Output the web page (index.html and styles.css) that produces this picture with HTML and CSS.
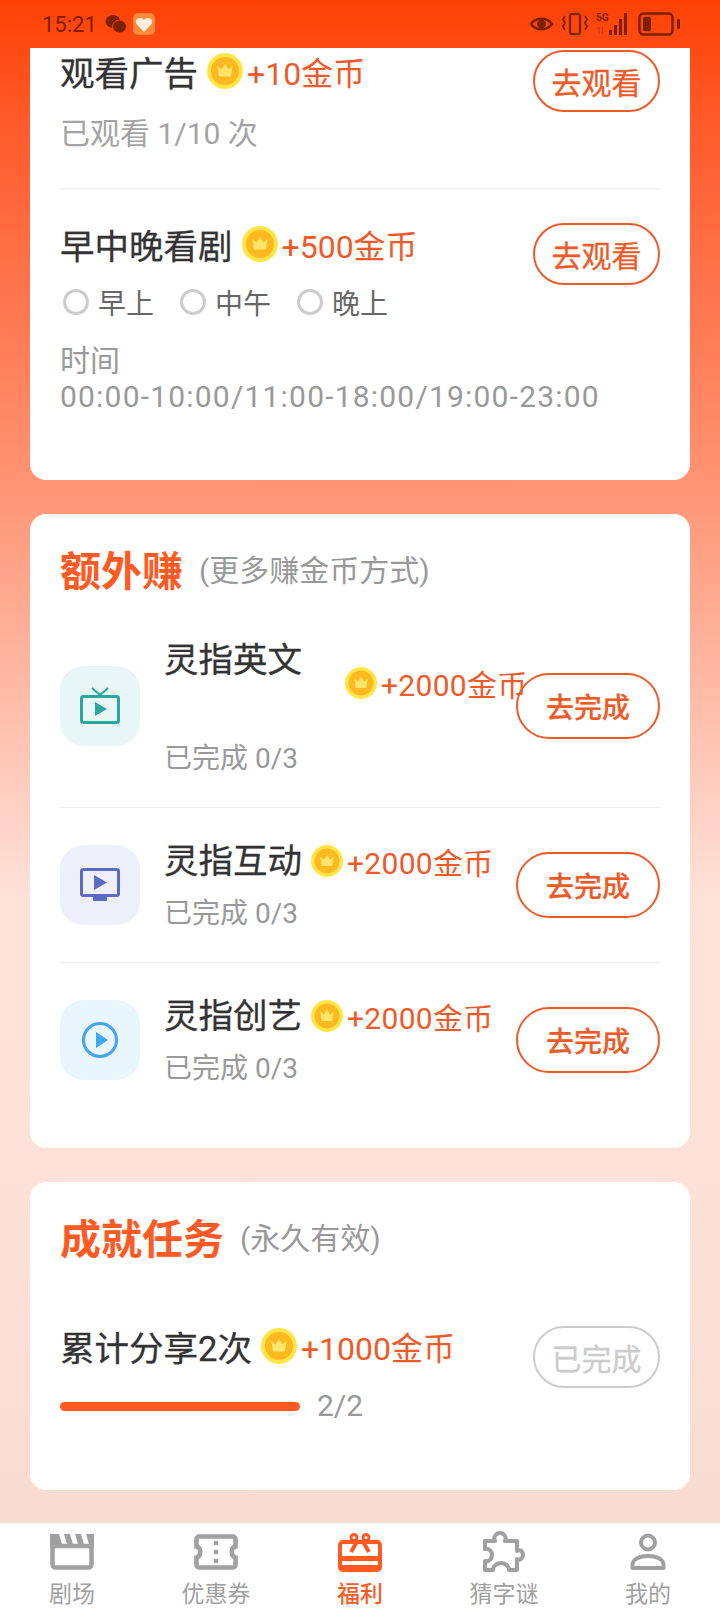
FILE: index.html
```html
<!DOCTYPE html>
<html lang="zh-CN">
<head>
    <meta charset="UTF-8">
    <meta name="viewport" content="width=720, initial-scale=1.0">
    <title>福利</title>
    <link rel="stylesheet" href="styles.css">
</head>
<body>
    <!-- 金币图标 -->
    <svg class="defs" width="0" height="0">
        <symbol id="coin" viewBox="0 0 36 36">
            <circle cx="18" cy="18" r="18" fill="#ffe546"/>
            <circle cx="18" cy="18" r="14" fill="#fdb91f"/>
            <path d="M10.500 13l4 3.600L18 11l3.500 5.600 4-3.600-1.500 10.500h-12z" fill="#ffe569"/>
        </symbol>
    </svg>

    <div class="page">
        <!-- 状态栏 -->
        <div class="status-bar">
            <span class="status-time">15:21</span>
            <svg width="22" height="20" viewBox="0 0 22 20">
                <ellipse cx="8" cy="7.500" rx="7.500" ry="6.500" fill="#7d2000"/>
                <ellipse cx="14.500" cy="12.500" rx="7" ry="6.500" fill="#7d2000" stroke="#ff4306" stroke-width="1"/>
            </svg>
            <svg class="status-app" width="22" height="22" viewBox="0 0 22 22">
                <rect width="22" height="22" rx="5" fill="#ff8a3c"/>
                <path d="M11 19L3.500 11c-3-4.500 4-8.500 7.500-4 3.500-4.500 10.500-.5 7.500 4z" fill="#ffeee2"/>
            </svg>
            <span class="status-space"></span>
            <svg width="25" height="18" viewBox="0 0 24 18">
                <path d="M1.500 9C6 2 18 2 22.500 9 18 16 6 16 1.500 9z" fill="none" stroke="#7d2000" stroke-width="2.500"/>
                <circle cx="12" cy="9" r="4.500" fill="#7d2000"/>
            </svg>
            <svg width="26" height="24" viewBox="0 0 26 24">
                <rect x="8" y="2" width="10" height="20" rx="2" fill="none" stroke="#7d2000" stroke-width="2.200"/>
                <path d="M3 4l-2 3.500L3 11l-2 3.500L3 18M23 4l2 3.500-2 3.500 2 3.500-2 3.500" fill="none" stroke="#7d2000" stroke-width="1.800"/>
            </svg>
            <svg width="34" height="24" viewBox="0 0 34 24">
                <text x="0" y="9" class="status-5g">5G</text>
                <text x="0" y="22" class="status-1">1l</text>
                <path d="M13 18h3v5h-3zM18 13h3v10h-3zM23 7h3v16h-3zM28 1h3v22h-3z" fill="#7d2000"/>
            </svg>
            <svg width="44" height="24" viewBox="0 0 44 24">
                <rect x="1.500" y="1.500" width="33" height="21" rx="4" fill="none" stroke="#7d2000" stroke-width="2.500"/>
                <rect x="5" y="5" width="8" height="14" rx="1.500" fill="#7d2000"/>
                <rect x="39" y="7" width="3" height="10" rx="1" fill="#7d2000"/>
            </svg>
        </div>

        <main class="content">
            <!-- 看广告 -->
            <section class="card card-top">
                <div class="task task-ad">
                    <div class="task-left">
                        <div class="task-title">
                            <span>观看广告</span>
                            <svg class="coin-big"><use href="#coin"/></svg>
                            <span class="reward">+10金币</span>
                        </div>
                        <div class="task-note">已观看 1/10 次</div>
                    </div>
                    <button class="btn">去观看</button>
                </div>
                <div class="task task-meal">
                    <div class="task-left">
                        <div class="task-title">
                            <span>早中晚看剧</span>
                            <svg class="coin-big"><use href="#coin"/></svg>
                            <span class="reward">+500金币</span>
                        </div>
                        <div class="periods">
                            <div class="period"><i class="radio"></i>早上</div>
                            <div class="period"><i class="radio"></i>中午</div>
                            <div class="period"><i class="radio"></i>晚上</div>
                        </div>
                        <div class="time-range">时间<br><span class="time-digits">00:00-10:00/11:00-18:00/19:00-23:00</span></div>
                    </div>
                    <button class="btn">去观看</button>
                </div>
            </section>

            <!-- 额外赚 -->
            <section class="card card-extra">
                <div class="card-head">
                    <h2>额外赚</h2>
                    <span>(更多赚金币方式)</span>
                </div>
                <div class="app-row app-row-first">
                    <div class="app-icon icon-teal">
                        <svg width="40" height="38" viewBox="0 0 40 38">
                            <path d="M12 1l8 7 8-7" fill="none" stroke="#2aa79b" stroke-width="2"/>
                            <rect x="1.500" y="9.500" width="37" height="26" rx="2" fill="none" stroke="#2aa79b" stroke-width="3"/>
                            <path d="M15 15l12 7-12 7z" fill="#2aa79b"/>
                        </svg>
                    </div>
                    <div class="app-info">
                        <div class="app-name">灵指英文</div>
                        <div class="app-reward-wrapped">
                            <svg class="coin-small"><use href="#coin"/></svg>
                            <span class="reward reward-small">+2000金币</span>
                        </div>
                        <div class="app-note app-note-wrapped">已完成 0/3</div>
                    </div>
                    <button class="btn btn-wide">去完成</button>
                </div>
                <div class="app-row">
                    <div class="app-icon icon-indigo">
                        <svg width="40" height="34" viewBox="0 0 40 34">
                            <rect x="1.500" y="1.500" width="37" height="26" rx="2" fill="none" stroke="#5b6bc0" stroke-width="3"/>
                            <path d="M14 7l13 7.500L14 22z" fill="#5b6bc0"/>
                            <rect x="13" y="29" width="14" height="4" fill="#5b6bc0"/>
                        </svg>
                    </div>
                    <div class="app-info">
                        <div class="app-line">
                            <span class="app-name">灵指互动</span>
                            <svg class="coin-small"><use href="#coin"/></svg>
                            <span class="reward reward-small">+2000金币</span>
                        </div>
                        <div class="app-note">已完成 0/3</div>
                    </div>
                    <button class="btn btn-wide">去完成</button>
                </div>
                <div class="app-row app-row-last">
                    <div class="app-icon icon-blue">
                        <svg width="38" height="38" viewBox="0 0 38 38">
                            <circle cx="19" cy="19" r="16.500" fill="none" stroke="#42a5f0" stroke-width="3"/>
                            <path d="M15 11l12 8-12 8z" fill="#42a5f0"/>
                        </svg>
                    </div>
                    <div class="app-info">
                        <div class="app-line">
                            <span class="app-name">灵指创艺</span>
                            <svg class="coin-small"><use href="#coin"/></svg>
                            <span class="reward reward-small">+2000金币</span>
                        </div>
                        <div class="app-note">已完成 0/3</div>
                    </div>
                    <button class="btn btn-wide">去完成</button>
                </div>
            </section>

            <!-- 成就任务 -->
            <section class="card card-achieve">
                <div class="card-head">
                    <h2>成就任务</h2>
                    <span>(永久有效)</span>
                </div>
                <div class="task task-share">
                    <div class="task-left">
                        <div class="task-title">
                            <span>累计分享2次</span>
                            <svg class="coin-big"><use href="#coin"/></svg>
                            <span class="reward">+1000金币</span>
                        </div>
                        <div class="progress-line">
                            <div class="progress"></div>
                            <span>2/2</span>
                        </div>
                    </div>
                    <button class="btn btn-done">已完成</button>
                </div>
            </section>
        </main>

        <!-- 底部导航 -->
        <nav class="tabbar">
            <div class="tab">
                <div class="tab-icon">
                    <svg width="44" height="36" viewBox="0 0 44 36">
                        <path d="M0 0h44v14H0z" fill="#a0a0a0"/>
                        <path d="M9 0h5l3 10h-5zM20 0h5l3 10h-5zM31 0h5l3 10h-5z" fill="#fff"/>
                        <path d="M2.500 12v18.500a3 3 0 0 0 3 3h33a3 3 0 0 0 3-3V12z" fill="none" stroke="#a0a0a0" stroke-width="4.500"/>
                    </svg>
                </div>
                <span>剧场</span>
            </div>
            <div class="tab">
                <div class="tab-icon">
                    <svg width="44" height="36" viewBox="0 0 44 36">
                        <path d="M5 2.500h34a2.500 2.500 0 0 1 2.500 2.500v7.500c-5 1-5 10 0 11V31a2.500 2.500 0 0 1-2.500 2.500H5A2.500 2.500 0 0 1 2.500 31v-7.500c5-1 5-10 0-11V5A2.500 2.500 0 0 1 5 2.500z" fill="none" stroke="#a0a0a0" stroke-width="4.500"/>
                        <path d="M20 7h4v4h-4zM20 16h4v4h-4zM20 25h4v4h-4z" fill="#a0a0a0"/>
                    </svg>
                </div>
                <span>优惠券</span>
            </div>
            <div class="tab tab-active">
                <div class="tab-icon">
                    <svg width="44" height="39" viewBox="0 0 44 39">
                        <rect x="2" y="9" width="40" height="28" rx="3" fill="none" stroke="#ff5a24" stroke-width="4"/>
                        <rect x="2" y="23" width="40" height="5" fill="#ff5a24"/>
                        <rect x="2" y="32" width="40" height="5" fill="#ff5a24"/>
                        <circle cx="16" cy="4.500" r="3" fill="none" stroke="#ff5a24" stroke-width="3"/>
                        <circle cx="28" cy="4.500" r="3" fill="none" stroke="#ff5a24" stroke-width="3"/>
                        <path d="M20 7l-7 12M24 7l7 12" fill="none" stroke="#ff5a24" stroke-width="4"/>
                    </svg>
                </div>
                <span>福利</span>
            </div>
            <div class="tab">
                <div class="tab-icon">
                    <svg width="44" height="42" viewBox="0 0 44 42">
                        <path d="M3 10h10c-2-4 1-8 5-8s7 4 5 8h12v10c4-2 6 1 6 4s-3 6-6 4v11h-8c0-4-4-7-8-7s-8 3-8 7H3v-9c4 1 7-2 7-6s-3-7-7-6z" fill="none" stroke="#a0a0a0" stroke-width="4" stroke-linejoin="round"/>
                    </svg>
                </div>
                <span>猜字谜</span>
            </div>
            <div class="tab">
                <div class="tab-icon">
                    <svg width="36" height="38" viewBox="0 0 36 38">
                        <circle cx="18" cy="9.500" r="7" fill="none" stroke="#a0a0a0" stroke-width="4"/>
                        <path d="M2.500 35v-3c0-6 7-9 15.500-9s15.500 3 15.500 9v3z" fill="none" stroke="#a0a0a0" stroke-width="4" stroke-linejoin="round"/>
                    </svg>
                </div>
                <span>我的</span>
            </div>
        </nav>
    </div>
</body>
</html>
```

FILE: styles.css
```css
body {
    margin: 0;
    padding: 0;
    font-family: Roboto, "Noto Sans CJK SC", sans-serif;
    color: #333;
}

.defs {
    display: block;
    height: 0;
}

.page {
    width: 720px;
    height: 1612px;
    overflow: hidden;
    display: flex;
    flex-direction: column;
    background: linear-gradient(#ff4104 0, #ff5a2a 120px, #ff9373 480px, #ffe2da 900px, #fde0d7 1300px, #f8dbd1 1523px);
}

/* 状态栏 */
.status-bar {
    height: 48px;
    flex-shrink: 0;
    display: flex;
    align-items: center;
    gap: 8px;
    padding: 0 38px 0 42px;
    box-sizing: border-box;
    color: #7d2000;
}

.status-time {
    font-size: 22px;
}

.status-app {
    margin-left: -2px;
}

.status-space {
    flex: 1;
}

.status-5g {
    font-size: 10px;
    font-weight: bold;
    fill: #7d2000;
}

.status-1 {
    font-size: 9px;
    fill: #b03a10;
}

/* 内容区 */
.content {
    flex: 1;
    overflow: hidden;
}

.card {
    margin: 0 30px 34px;
    padding: 0 30px;
    background-color: #fff;
    border-radius: 16px;
}

.card-top {
    height: 432px;
    border-radius: 0 0 16px 16px;
    box-sizing: border-box;
}

.card-head {
    display: flex;
    align-items: center;
    gap: 16px;
    height: 56px;
    padding-top: 30px;
}

.card-head h2 {
    margin: 0;
    font-size: 41px;
    line-height: 56px;
    color: #ff5a24;
}

.card-head span {
    margin-top: -8px;
    font-size: 30px;
    color: #999;
}

/* 任务行 */
.task {
    display: flex;
    justify-content: space-between;
    align-items: flex-start;
}

.task-ad {
    padding-top: 2px;
    height: 138px;
    border-bottom: 1px solid #eee;
}

.task-ad .task-left {
    margin-top: -3px;
}

.task-meal {
    padding-top: 34px;
}

.task-meal .task-left {
    margin-top: -3px;
}

.task-left {
    flex: 1;
    min-width: 0;
}

.task-title {
    display: flex;
    align-items: center;
    height: 48px;
    font-size: 34.5px;
    -webkit-text-stroke: 0.3px #333;
}

.coin-big {
    flex-shrink: 0;
    width: 36px;
    height: 36px;
    margin: 0 4px 0 9px;
}

.coin-small {
    flex-shrink: 0;
    width: 32px;
    height: 32px;
    margin: 0 4px 0 9px;
}

.reward {
    font-size: 32px;
    color: #f05a28;
    white-space: nowrap;
    -webkit-text-stroke: 0;
}

.reward-small {
    font-size: 30px;
    letter-spacing: 0.3px;
}

.task-note {
    margin-top: 19px;
    font-size: 30px;
    line-height: 40px;
    color: #a3a3a3;
}

/* 早中晚 */
.periods {
    display: flex;
    margin-top: 19px;
    height: 30px;
}

.period {
    width: 117px;
    display: flex;
    align-items: center;
    gap: 9px;
    font-size: 28px;
    color: #666;
}

.radio {
    width: 20px;
    height: 20px;
    margin-left: 3px;
    border: 3px solid #ccc;
    border-radius: 50%;
}

.time-range {
    margin-top: 26px;
    font-size: 30px;
    line-height: 36px;
    color: #999;
    white-space: nowrap;
}

.time-digits {
    letter-spacing: 1.2px;
}

/* 按钮 */
.btn {
    flex-shrink: 0;
    width: 127px;
    height: 62px;
    padding: 0;
    background: transparent;
    border: 2px solid #f05a28;
    border-radius: 31px;
    font-family: inherit;
    font-size: 30px;
    color: #f05a28;
    -webkit-text-stroke: 0.3px currentColor;
}

.btn-wide {
    width: 144px;
    height: 66px;
    border-radius: 33px;
    font-size: 28px;
    font-weight: 500;
    -webkit-text-stroke: 0.2px currentColor;
}

.btn-done {
    margin-top: 4px;
    border-color: #ccc;
    color: #ccc;
}

/* 应用行 */
.app-row {
    display: flex;
    align-items: center;
    padding: 26px 0;
    border-bottom: 1px solid #eee;
}

.app-row-first {
    padding: 36px 0 31px;
}

.app-row-last {
    padding-bottom: 57px;
    border-bottom: none;
}

.app-icon {
    width: 80px;
    height: 80px;
    flex-shrink: 0;
    margin-right: 24px;
    border-radius: 24px;
    display: flex;
    align-items: center;
    justify-content: center;
}

.icon-teal {
    background-color: #e8f6f5;
}

.icon-indigo {
    background-color: #edf0fa;
}

.icon-blue {
    background-color: #e9f5ff;
}

.app-info {
    flex: 1;
    min-width: 0;
}

.app-line {
    display: flex;
    align-items: center;
    height: 48px;
    margin-top: 3px;
}

.app-name {
    font-size: 34.5px;
    line-height: 48px;
    -webkit-text-stroke: 0.3px #333;
}

.app-note {
    margin: 5px 0 -2px;
    font-size: 28px;
    line-height: 48px;
    color: #999;
}

/* 灵指英文 这一行金币掉到下面了 */
.app-reward-wrapped {
    display: flex;
    align-items: center;
    height: 40px;
    margin: -21px 0 0 172px;
}

.app-note-wrapped {
    margin: 37px 0 -2px;
    line-height: 38px;
}

/* 成就 */
.task-share {
    padding-top: 54px;
}

.card-achieve {
    height: 308px;
    box-sizing: border-box;
}

.progress-line {
    display: flex;
    align-items: center;
    gap: 17px;
    margin-top: 17px;
    font-size: 30px;
    line-height: 38px;
    color: #999;
}

.progress {
    width: 240px;
    height: 9px;
    border-radius: 5px;
    background-color: #ff5a24;
}

/* 底部导航 */
.tabbar {
    height: 89px;
    flex-shrink: 0;
    display: flex;
    background-color: #fff;
}

.tab {
    flex: 1;
    height: 89px;
    padding-top: 8px;
    box-sizing: border-box;
    display: flex;
    flex-direction: column;
    align-items: center;
    font-size: 23px;
    line-height: 34px;
    color: #a0a0a0;
}

.tab-icon {
    height: 47px;
    padding-bottom: 5px;
    box-sizing: border-box;
    display: flex;
    align-items: center;
}

.tab-active {
    color: #ff5a24;
    font-weight: 500;
}
```
